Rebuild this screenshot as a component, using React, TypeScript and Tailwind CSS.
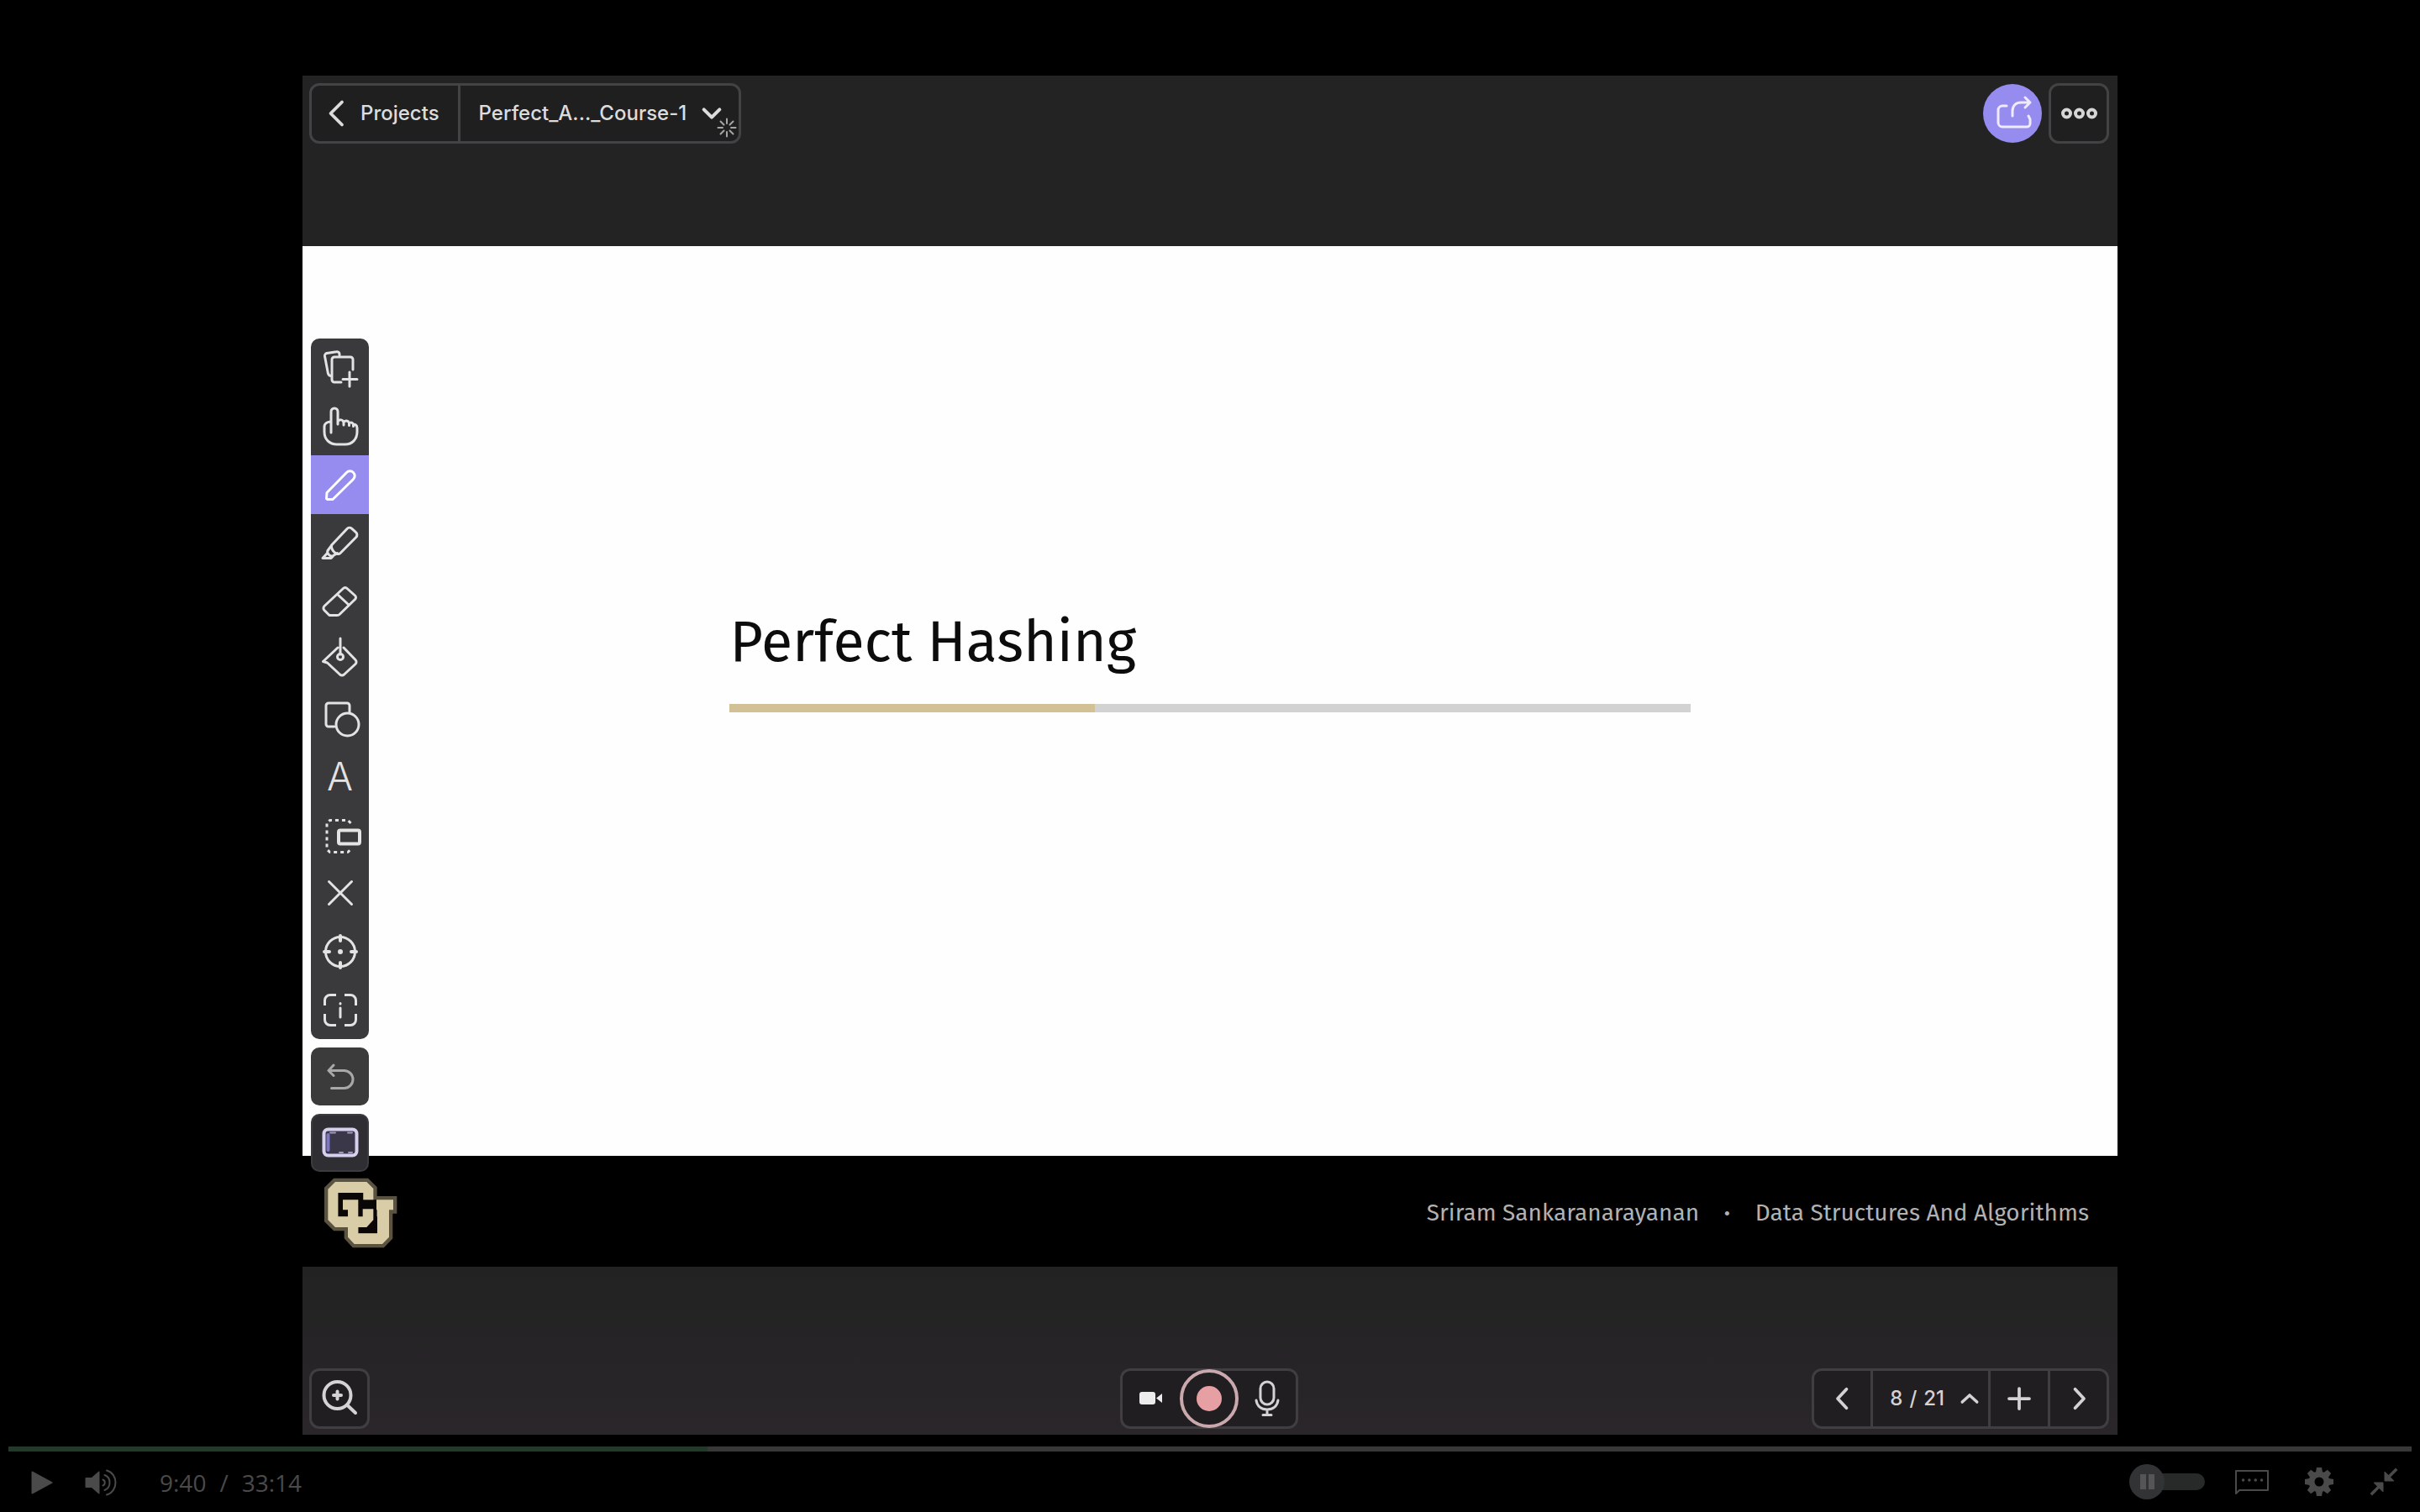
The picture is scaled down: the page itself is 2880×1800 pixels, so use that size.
import type { ReactNode } from 'react';

type IconProps = { children: ReactNode; size?: string; weight?: number };

function Icon({ children, size = 'size-12', weight = 3 }: IconProps) {
  return (
    <svg
      viewBox="0 0 48 48"
      className={`${size} shrink-0 overflow-visible`}
      fill="none"
      stroke="currentColor"
      strokeWidth={weight}
      strokeLinecap="round"
      strokeLinejoin="round"
      aria-hidden="true"
    >
      {children}
    </svg>
  );
}

const tools: { name: string; active?: boolean; art: ReactNode }[] = [
  {
    name: 'Add page',
    art: (
      <Icon>
        <path d="M39 26V14a3 3 0 0 0-3-3H17a3 3 0 0 0-3 3v24a3 3 0 0 0 3 3h8M35 29v17M27 37.500h17" />
        <path d="M23 9V7.500a3 3 0 0 0-3.600-2.800L8 6.600A3 3 0 0 0 5.500 10l3.800 20c.3 2 1.500 3.500 4 3.500" />
      </Icon>
    ),
  },
  {
    name: 'Pointer',
    art: (
      <Icon>
        <path d="M13 32V7a4 4 0 0 1 8 0v15M21 19c2-3 6-3 7 1v3M28 19.500c2-2.500 5.500-2 6.500 1v3M34.500 21c2-2 4.500-1 5 1.500v2M39.500 22c3 0 4.500 2 4.500 5v4c0 9-6 15-14 15H20C11 46 5 40 5 31v-6c0-4 4-6 8-6" />
      </Icon>
    ),
  },
  {
    name: 'Pen',
    active: true,
    art: (
      <Icon>
        <path d="M7.500 40.500 8 33.500 31.500 9.500a5.600 5.600 0 0 1 8 8L15 41.500H8.500z" />
      </Icon>
    ),
  },
  {
    name: 'Highlighter',
    art: (
      <Icon>
        <path d="M14 26.500 32 7.500a4 4 0 0 1 5.500-.3l5 4.500a4 4 0 0 1 .3 5.800L24 36.500c-2 2-5 1-7.500-1.500s-4-6.500-2.500-8.500z" />
        <path d="M13.500 27.500 9 33.500c-1 2 0 3.500 1.500 5s3 2 5 1l5-3M8.500 36.500l-5.500 6h10l2.500-2.500" />
      </Icon>
    ),
  },
  {
    name: 'Eraser',
    art: (
      <Icon>
        <path d="M27.500 8.500a3 3 0 0 1 4.500 0l9.500 8.500a3 3 0 0 1 0 4.500L23 39.500q-1 1-2.500 1H11l-6-6a3.500 3.500 0 0 1 0-5zM20.500 15.500 34 28" />
      </Icon>
    ),
  },
  {
    name: 'Fill',
    art: (
      <Icon>
        <path d="M24-1v19M21 10 3.500 26.500l5 1.500 15 14a4 4 0 0 0 5 0L42 29.500a3.500 3.500 0 0 0 0-5L28 10" />
        <circle cx="24" cy="21" r="3.500" />
      </Icon>
    ),
  },
  {
    name: 'Shapes',
    art: (
      <Icon>
        <path d="M17 34h-7a3 3 0 0 1-3-3V9a3 3 0 0 1 3-3h22a3 3 0 0 1 3 3v8" />
        <circle cx="32.500" cy="31.500" r="13.500" />
      </Icon>
    ),
  },
  {
    name: 'Text',
    art: <span className="text-[46px] leading-none font-light">A</span>,
  },
  {
    name: 'Lasso',
    art: (
      <Icon>
        <path
          d="M36.500 10 33 6.500H11.500L8 10v31l3.500 3.500H33l3.500-3.500"
          strokeDasharray="4 4"
          strokeLinecap="butt"
        />
        <rect x="22" y="18.500" width="25" height="16" rx="2" strokeWidth="4" />
      </Icon>
    ),
  },
  {
    name: 'Clear',
    art: (
      <Icon>
        <path d="m10.500 10.500 27 27m0-27-27 27" />
      </Icon>
    ),
  },
  {
    name: 'Laser',
    art: (
      <Icon>
        <circle cx="24" cy="24" r="17.500" />
        <path d="M24 5v6M24 37v6M5 24h6M37 24h6" strokeWidth="4" />
        <circle cx="24" cy="24" r="1.500" />
      </Icon>
    ),
  },
  {
    name: 'Info frame',
    art: (
      <Icon>
        <path
          d="M19 6.500h-7A6.500 6.500 0 0 0 5.500 13v6M29 6.500h7a6.500 6.500 0 0 1 6.500 6.500v6M5.500 29v7a6.500 6.500 0 0 0 6.500 6.500h7M42.500 29v7a6.500 6.500 0 0 1-6.500 6.500h-7"
          strokeLinecap="butt"
        />
        <path d="M24 16.500v.5M24 22v11" />
      </Icon>
    ),
  },
];

function ToolRail() {
  return (
    <div className="absolute top-[313px] left-[10px] flex w-[69px] flex-col gap-[10px] text-[#e3e3e3]">
      <div className="grid h-[834px] auto-rows-fr overflow-hidden rounded-[10px] bg-[#3a393b]">
        {tools.map((tool) => (
          <button
            key={tool.name}
            type="button"
            aria-label={tool.name}
            className={
              tool.active
                ? 'flex items-center justify-center bg-[#968cf0] text-white'
                : 'flex items-center justify-center'
            }
          >
            {tool.art}
          </button>
        ))}
      </div>
      <button
        type="button"
        aria-label="Undo"
        className="flex h-[69px] items-center justify-center rounded-[10px] bg-[#3b3b3c] text-[#a8a8a8]"
      >
        <Icon>
          <path d="M13.500 37.500h15a10.500 10.500 0 0 0 0-21H10.500M16 10l-6 6.500 6 6" />
        </Icon>
      </button>
      <button
        type="button"
        aria-label="Fit to screen"
        className="flex h-[69px] items-center justify-center rounded-[10px] border-2 border-[#3c3b3f] bg-[#2f2e32] text-[#d6d0ee]"
      >
        <Icon>
          <rect x="4.500" y="7.500" width="39" height="31" rx="5" fill="#3a3749" strokeWidth="4" />
          <path d="M9.500 14v18" stroke="#7f76c4" strokeWidth="4" />
          <path d="M12 11.500h6M33 11.500h5M23 35h4M34 35h4" stroke="#9d97bd" strokeWidth="2" />
        </Icon>
      </button>
    </div>
  );
}

function SchoolLogo() {
  const c =
    'M150 528H262L286 552V592H250V567H160V652H248V625H286V664L262 690H150L124 664V554Z';
  const u =
    'M177 592H232V712H300V628H297V592H357V628H342V725L318 750H218L195 725V628H177Z';
  return (
    <svg viewBox="105 510 270 261" className="h-[87px] w-[90px]" role="img" aria-label="CU">
      <g fill="#5b5341" stroke="#5b5341" strokeWidth="26">
        <path d={c} />
        <path d={u} />
      </g>
      <path d="M160 567H250V592H297V652H300V712H232V652H160Z" fill="#0b0706" />
      <g fill="#d8cda6">
        <path d={c} />
        <path d={u} />
      </g>
    </svg>
  );
}

function TopBar() {
  return (
    <header className="flex h-[203px] items-start justify-between bg-[#232324] pt-[9px] pr-[10px] pl-2 text-[#dcdcdc]">
      <div className="flex h-[72px] rounded-xl border-[3px] border-[#434345] bg-[#1f1f20] text-[24px] font-medium">
        <button
          type="button"
          className="flex items-center gap-[10px] border-r-[3px] border-[#434345] pr-[22px] pl-[12px]"
        >
          <Icon size="size-9" weight={5}>
            <path d="M32 6 14 24l18 18" />
          </Icon>
          Projects
        </button>
        <button type="button" className="relative flex items-center gap-[14px] pr-[16px] pl-[22px]">
          Perfect_A..._Course-1
          <Icon size="size-8" weight={6}>
            <path d="m10 17 14 14 14-14" />
          </Icon>
          <span className="absolute right-[2px] bottom-[4px] text-[#a5a5a5]">
            <Icon size="size-6" weight={4}>
              <path d="M24 3v11M24 34v11M3 24h11M34 24h11M9 9l8 8M31 31l8 8M39 9l-8 8M17 31l-8 8" />
            </Icon>
          </span>
        </button>
      </div>
      <div className="flex items-center gap-2">
        <button
          type="button"
          aria-label="Share"
          className="flex size-[70px] items-center justify-center rounded-full bg-[#968cf0] text-[#efeafc]"
        >
          <Icon>
            <path d="M17 15h-5a5 5 0 0 0-5 5v15a5 5 0 0 0 5 5h29a4 4 0 0 0 4-4v-5l-2-4M24 27v-6c0-6 4-10 10-10h11M39 5l6 6-6 6" />
          </Icon>
        </button>
        <button
          type="button"
          aria-label="More"
          className="flex size-[72px] items-center justify-center rounded-xl border-[3px] border-[#434345] bg-[#1f1f20] text-[#d6d6d6]"
        >
          <Icon weight={4}>
            <circle cx="9.500" cy="24" r="4.500" />
            <circle cx="24.500" cy="24" r="4.500" />
            <circle cx="39.500" cy="24" r="4.500" />
          </Icon>
        </button>
      </div>
    </header>
  );
}

function Slide() {
  return (
    <main>
      <section className="flex h-[1083px] flex-col items-center bg-[#fefefe] pt-[426px]">
        <div className="w-[53%]">
          <h1 className="pl-[1px] font-['Fira_Sans','Noto_Sans',sans-serif] text-[68px] leading-[90px] text-[#0c0c0c]">
            Perfect Hashing
          </h1>
          <div className="mt-[29px] flex h-[10px] bg-[#d2d2d2]">
            <div className="w-[38%] bg-[#d1c195]" />
          </div>
        </div>
      </section>
      <footer className="flex h-[132px] items-center justify-between bg-black pt-[4px] pr-[34px] pl-[24px]">
        <SchoolLogo />
        <p className="flex gap-[30px] font-['Fira_Sans','Noto_Sans',sans-serif] text-[28px] text-[#b2b2b2]">
          <span>Sriram Sankaranarayanan</span>
          <span className="font-bold">·</span>
          <span>Data Structures And Algorithms</span>
        </p>
      </footer>
    </main>
  );
}

function BottomBar() {
  return (
    <div className="grid h-[200px] grid-cols-3 items-end bg-linear-to-b from-[#222222] to-[#2a262a] pr-[10px] pb-[7px] pl-2 text-[#d4d2d4]">
      <button
        type="button"
        aria-label="Zoom in"
        className="flex size-[72px] items-center justify-center rounded-xl border-[3px] border-[#403e40] bg-[#201e20]"
      >
        <Icon weight={4}>
          <circle cx="21.500" cy="20" r="16" />
          <path d="m33 31.500 10 9.500M21.500 15.500v9M17 20h9" />
        </Icon>
      </button>
      <div className="flex h-[72px] items-center justify-between justify-self-center rounded-xl border-[3px] border-[#403e40] bg-[#201e20]">
        <button type="button" aria-label="Camera" className="flex w-[68px] justify-center">
          <Icon>
            <rect x="10" y="16" width="19" height="15" rx="3" fill="#ececec" stroke="none" />
            <path d="M30 23.500 37 18v11z" fill="#ececec" stroke="none" />
          </Icon>
        </button>
        <button
          type="button"
          aria-label="Record"
          className="flex size-[70px] items-center justify-center rounded-full border-4 border-[#c9a9ae]"
        >
          <span className="size-[30px] rounded-full bg-[#e6a0a3]" />
        </button>
        <button type="button" aria-label="Microphone" className="flex w-[68px] justify-center">
          <Icon>
            <rect x="16" y="4" width="16" height="27" rx="8" />
            <path d="M11 26c1 7 6 11 13 11s12-4 13-11M24 37v6M19 43.500h10" />
          </Icon>
        </button>
      </div>
      <div className="flex h-[72px] items-stretch divide-x-[3px] divide-[#403e40] justify-self-end rounded-xl border-[3px] border-[#403e40] bg-[#201e20]">
        <button type="button" aria-label="Previous page" className="flex w-[70px] items-center justify-center">
          <Icon size="size-9" weight={5}>
            <path d="M30 9 16 24l14 15" />
          </Icon>
        </button>
        <button type="button" className="flex w-[140px] items-center justify-end gap-[16px] pr-[8px] text-[24px] font-medium">
          <span className="flex gap-[8px]">
            <span>8</span>
            <span>/</span>
            <span>21</span>
          </span>
          <Icon size="size-7" weight={6}>
            <path d="m9 31 15-14 15 14" />
          </Icon>
        </button>
        <button type="button" aria-label="Add page" className="flex w-[71px] items-center justify-center">
          <Icon size="size-9" weight={5}>
            <path d="M24 8v32M8 24h32" />
          </Icon>
        </button>
        <button type="button" aria-label="Next page" className="flex w-[67px] items-center justify-center">
          <Icon size="size-9" weight={5}>
            <path d="m18 9 14 15-14 15" />
          </Icon>
        </button>
      </div>
    </div>
  );
}

const teeth = [0, 45, 90, 135, 180, 225, 270, 315];

function PlayerControls() {
  return (
    <div className="mt-[14px] px-[10px] text-[#4a4a4a]">
      <input
        type="range"
        aria-label="Seek"
        min={0}
        max={1994}
        defaultValue={580}
        className="block h-[6px] w-full appearance-none bg-[linear-gradient(to_right,#213a2a_29.1%,#383838_29.1%)] [&::-webkit-slider-thumb]:appearance-none [&::-webkit-slider-thumb]:opacity-0"
      />
      <div className="flex h-[72px] items-center justify-between pr-[16px] pl-[27px]">
        <div className="flex items-center pt-[2px]">
          <button type="button" aria-label="Pause or play">
            <svg viewBox="0 0 26 28" className="h-[28px] w-[26px]" fill="currentColor" aria-hidden="true">
              <path d="M.5 1.500c0-1 .7-1.300 1.500-.8l23 12.500c.8.500.8 1.100 0 1.600L2 27.300c-.8.500-1.500.2-1.500-.8z" />
            </svg>
          </button>
          <button type="button" aria-label="Volume" className="ml-[38px]">
            <svg viewBox="0 0 38 32" className="h-[32px] w-[38px]" fill="none" stroke="currentColor" strokeWidth="2" strokeLinecap="round" aria-hidden="true">
              <path d="M1.500 10h6.500L16 3c.8-.7 1.500-.4 1.500.6v24.800c0 1-.7 1.300-1.500.6L8 22H1.500C.8 22 .5 21.500.5 21V11c0-.6.3-1 1-1z" fill="currentColor" stroke="none" />
              <path d="M21.500 12.500c3 1 3 6 0 7M23.500 7c8 3 8 15 0 18M26 1.500c14 4 14 25 0 29" />
            </svg>
          </button>
          <p className="ml-[51px] flex gap-[16px] font-['Open_Sans',sans-serif] text-[28px]">
            <span>9:40</span>
            <span>/</span>
            <span>33:14</span>
          </p>
        </div>
        <div className="flex items-center">
          <label className="relative flex h-[42px] w-[90px] items-center">
            <input type="checkbox" aria-label="Autoplay" className="peer sr-only" />
            <span className="ml-[20px] h-[20px] flex-1 rounded-full bg-[#282a2a]" />
            <span className="absolute left-0 flex size-[42px] items-center justify-center gap-[3px] rounded-full bg-[#323335]">
              <span className="h-[18px] w-[7px] bg-[#555555]" />
              <span className="h-[18px] w-[7px] bg-[#555555]" />
            </span>
          </label>
          <button type="button" aria-label="Captions" className="ml-[36px]">
            <svg viewBox="0 0 40 29" className="h-[29px] w-[40px]" fill="none" stroke="currentColor" strokeWidth="2" strokeLinejoin="round" aria-hidden="true">
              <path d="M1 1h38v23H5l-4 4z" />
              <path d="M9.500 12h.1M16.800 12h.1M24.200 12h.1M31.500 12h.1" strokeWidth="3.500" strokeLinecap="round" />
            </svg>
          </button>
          <button type="button" aria-label="Settings" className="ml-[43px]">
            <svg viewBox="0 0 34 34" className="size-[34px]" fill="currentColor" aria-hidden="true">
              {teeth.map((angle) => (
                <path key={angle} d="M14 0h6l1.500 8h-9z" transform={`rotate(${angle} 17 17)`} />
              ))}
              <circle cx="17" cy="17" r="9" fill="none" stroke="currentColor" strokeWidth="7" />
            </svg>
          </button>
          <button type="button" aria-label="Exit full screen" className="ml-[43px]">
            <svg viewBox="0 0 34 34" className="size-[34px]" fill="currentColor" aria-hidden="true">
              <path d="M31 .5 33.500 3 25 11.500l4 4q.5 1-.5 1H18.500q-1 0-1-1V5.500q0-1 1-.5l4 4z" />
              <path d="M3 33.500.5 31 9 22.500l-4-4q-.5-1 .5-1h10q1 0 1 1v10q0 1-1 .5l-4-4z" />
            </svg>
          </button>
        </div>
      </div>
    </div>
  );
}

export default function App() {
  return (
    <div className="min-h-screen bg-black pt-[90px] font-[Inter,sans-serif]">
      <div className="relative mx-auto w-3/4">
        <TopBar />
        <Slide />
        <BottomBar />
        <ToolRail />
      </div>
      <PlayerControls />
    </div>
  );
}
